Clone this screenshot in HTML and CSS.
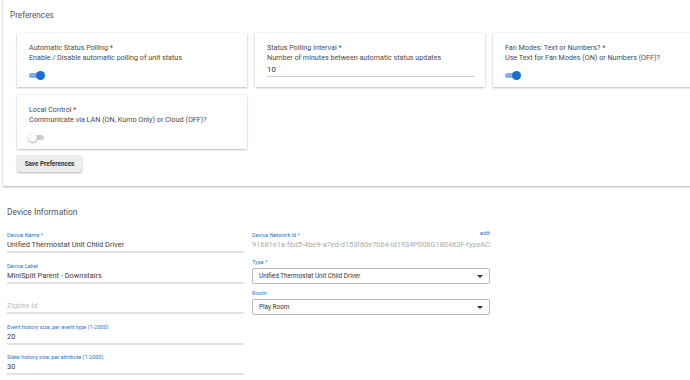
FILE: index.html
```html
<!DOCTYPE html>
<html lang="en">
  <head>
    <meta charset="UTF-8" />
    <meta name="viewport" content="width=device-width, initial-scale=1.0" />
    <title>Device</title>
    <link rel="stylesheet" href="styles.css">
  </head>
  <body>
    <section class="prefs">
      <h2>Preferences</h2>
      <div class="pref-grid">
        <div class="card">
          <p>Automatic Status Polling *</p>
          <p>Enable / Disable automatic polling of unit status</p>
          <span class="toggle on"></span>
        </div>
        <div class="card">
          <p>Status Polling Interval *</p>
          <p>Number of minutes between automatic status updates</p>
          <div class="card-input">10</div>
        </div>
        <div class="card">
          <p>Fan Modes: Text or Numbers? *</p>
          <p>Use Text for Fan Modes (ON) or Numbers (OFF)?</p>
          <span class="toggle on"></span>
        </div>
        <div class="card">
          <p>Local Control *</p>
          <p>Communicate via LAN (ON, Kumo Only) or Cloud (OFF)?</p>
          <span class="toggle"></span>
        </div>
      </div>
      <button class="save-btn">Save Preferences</button>
    </section>

    <section class="device">
      <h2>Device Information</h2>
      <div class="device-grid">
        <div class="col">
          <div class="field">
            <label>Device Name *</label>
            <div class="value">Unified Thermostat Unit Child Driver</div>
          </div>
          <div class="field">
            <label>Device Label</label>
            <div class="value">MiniSplit Parent - Downstairs</div>
          </div>
          <div class="field">
            <label>&nbsp;</label>
            <div class="value placeholder">Zigbee Id</div>
          </div>
          <div class="field">
            <label>Event history size, per event type (1-2000)</label>
            <div class="value">20</div>
          </div>
          <div class="field">
            <label>State history size, per attribute (1-2000)</label>
            <div class="value">30</div>
          </div>
        </div>
        <div class="col">
          <div class="field net-field">
            <label class="with-edit">Device Network Id * <a href="#">edit</a></label>
            <div class="value disabled">91681e1a-f6d5-4be9-a7ed-d153f60e7b64-id1934P008G180463F-typeAC</div>
          </div>
          <div class="select-field">
            <label>Type *</label>
            <div class="select">Unified Thermostat Unit Child Driver</div>
          </div>
          <div class="select-field">
            <label>Room</label>
            <div class="select">Play Room</div>
          </div>
        </div>
      </div>
    </section>
  </body>
</html>
```
FILE: styles.css
```css
* {
  padding: 0;
  margin: 0;
  box-sizing: border-box;
}

body {
  background-color: white;
  font-family: Roboto, "Liberation Sans", sans-serif;
  color: #444;
  overflow: hidden;
  width: 690px;
  height: 380px;
}

.prefs {
  width: 740px;
  margin-left: 3px;
  padding: 9px 14px 14px;
  background-color: white;
  box-shadow: 0 1px 2px rgba(0, 0, 0, 0.3), 0 0 1px rgba(0, 0, 0, 0.15);
}

.prefs h2 {
  font-size: 8.2px;
  font-weight: normal;
  color: #555;
  line-height: 12px;
  margin-left: -7px;
  margin-bottom: 12px;
}

.pref-grid {
  display: grid;
  grid-template-columns: 230px 230px 230px;
  column-gap: 8px;
  row-gap: 8px;
}

.card {
  height: 54px;
  padding: 10px 12px 0;
  background-color: white;
  box-shadow: 0 1px 2px rgba(0, 0, 0, 0.25), 0 0 1px rgba(0, 0, 0, 0.12);
  font-size: 7.2px;
  line-height: 10px;
  color: #4a4a4a;
}

.toggle {
  display: block;
  position: relative;
  width: 15px;
  height: 5px;
  margin-top: 10px;
  border-radius: 3px;
  background-color: #cdcdcd;
}

.toggle::after {
  content: "";
  position: absolute;
  top: -2px;
  left: -1px;
  width: 9px;
  height: 9px;
  border-radius: 50%;
  background-color: #fafafa;
  box-shadow: 0 1px 2px rgba(0, 0, 0, 0.35);
}

.toggle.on {
  background-color: #7eb1e8;
}

.toggle.on::after {
  left: auto;
  right: -1px;
  background-color: #1a6fcf;
  box-shadow: none;
}

.card-input {
  width: 208px;
  margin-top: 2px;
  font-size: 7.8px;
  line-height: 10px;
  color: #333;
  border-bottom: 1px solid #cfcfcf;
  padding-bottom: 1px;
}

.save-btn {
  margin-top: 6px;
  width: 65px;
  height: 17px;
  border: none;
  border-radius: 2px;
  background-color: #ececec;
  box-shadow: 0 1px 2px rgba(0, 0, 0, 0.3);
  font-family: Roboto, "Liberation Sans", sans-serif;
  font-size: 6.3px;
  font-weight: bold;
  color: #333;
}

.device {
  padding: 20px 7px 0;
}

.device h2 {
  font-size: 8.4px;
  font-weight: normal;
  color: #555;
  line-height: 12px;
  margin-bottom: 13px;
}

.device-grid {
  display: grid;
  grid-template-columns: 237px 238px;
  column-gap: 8px;
}

.field {
  margin-bottom: 8.5px;
}

.field label,
.select-field label {
  display: block;
  font-size: 5.5px;
  line-height: 8px;
  color: #1f74cc;
}

.field .with-edit {
  display: flex;
  justify-content: space-between;
}

.with-edit a {
  color: #1f74cc;
  text-decoration: none;
  margin-top: -2px;
  font-size: 6px;
}

.value {
  font-size: 7.4px;
  line-height: 12px;
  color: #404040;
  border-bottom: 2px solid #e2e2e2;
  white-space: nowrap;
  overflow: hidden;
}

.value.placeholder {
  color: #bbb;
}

.value.disabled {
  color: #aaa;
  border-bottom-color: transparent;
}

.net-field {
  margin-bottom: 5px;
}

.select-field {
  margin-bottom: 5px;
}

.select {
  position: relative;
  height: 16px;
  margin-top: 2px;
  padding-left: 6px;
  border: 1px solid #b9b9b9;
  border-radius: 2px;
  font-size: 6.4px;
  line-height: 14px;
  color: #333;
}

.select::after {
  content: "";
  position: absolute;
  right: 6px;
  top: 6px;
  border-left: 3px solid transparent;
  border-right: 3px solid transparent;
  border-top: 3px solid #333;
}
```
